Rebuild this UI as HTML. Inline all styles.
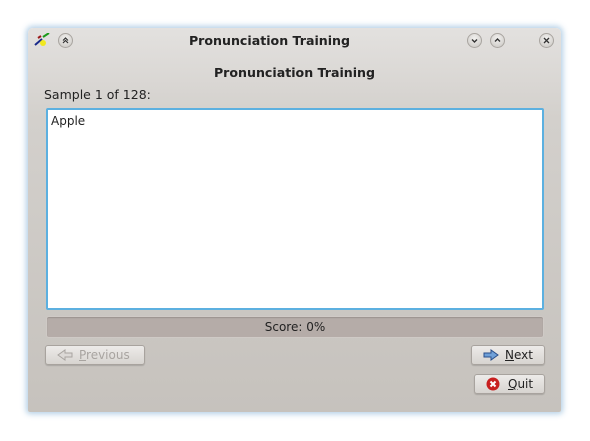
<html><head><style>
body{margin:0;width:590px;height:441px;background:#fff;position:relative;overflow:hidden;font-family:"DejaVu Sans","Liberation Sans",sans-serif;font-size:12px;color:#222}
.win{position:absolute;left:28px;top:28px;width:533px;height:384px;border-radius:5px 5px 2px 2px;background:linear-gradient(#e3e1df,#d3d0cc 90px,#c6c2bd);box-shadow:0 0 6px 2px rgba(90,150,200,.45);}
.a{position:absolute}
.cb{position:absolute;width:13px;height:13px;border-radius:50%;background:radial-gradient(circle at 50% 35%,#f2f1ef,#c9c6c2);border:1px solid #a9a5a0}
.cb svg{position:absolute;left:0;top:0}
.btn{position:absolute;height:18px;border:1px solid #a8a39e;border-radius:3px;background:linear-gradient(#edebe9,#d7d4d0);font-size:12px;line-height:18px;box-shadow:0 1px 1px rgba(0,0,0,.15)}
</style></head><body>
<div class="win">
<svg class="a" style="left:6px;top:5px" width="16" height="14"><line x1="1" y1="12" x2="8" y2="6" stroke="#1a2a8a" stroke-width="2"/><line x1="4" y1="5" x2="7" y2="3" stroke="#9a1a1a" stroke-width="2"/><line x1="9" y1="4" x2="15" y2="0" stroke="#1a9a1a" stroke-width="2"/><circle cx="9" cy="10" r="3" fill="#f0e820"/></svg>
<div class="cb" style="left:30px;top:5px"><svg width="13" height="13"><path d="M4 6.5 6.5 4 9 6.5M4 9 6.5 6.5 9 9" fill="none" stroke="#333" stroke-width="1.2"/></svg></div>
<div class="a" style="left:0;width:483px;top:5px;text-align:center;font-weight:bold;font-size:12.6px">Pronunciation Training</div>
<div class="cb" style="left:439px;top:5px"><svg width="13" height="13"><path d="M4 5.5 6.5 8 9 5.5" fill="none" stroke="#333" stroke-width="1.4"/></svg></div>
<div class="cb" style="left:462px;top:5px"><svg width="13" height="13"><path d="M4 7.5 6.5 5 9 7.5" fill="none" stroke="#333" stroke-width="1.4"/></svg></div>
<div class="cb" style="left:511px;top:5px"><svg width="13" height="13"><path d="M4 4 9 9M9 4 4 9" fill="none" stroke="#333" stroke-width="1.3"/></svg></div>
<div class="a" style="left:0;width:533px;top:37px;text-align:center;font-weight:bold;font-size:12.6px">Pronunciation Training</div>
<div class="a" style="left:16px;top:59px;font-size:12.5px">Sample 1 of 128:</div>
<div class="a" style="left:18px;top:80px;width:494px;height:198px;background:#fff;border:2px solid #5cb0e0;border-radius:2px"><div style="padding:4px 3px">Apple</div></div>
<div class="a" style="left:18px;top:288px;width:496px;height:20px;background:#b5aca8;border:1px solid #cfcac6;border-radius:3px;text-align:center;line-height:20px;box-shadow:inset 0 1px 1px rgba(0,0,0,.15)">Score: 0%</div>
<div class="btn" style="left:17px;top:317px;width:98px;color:#a8a4a0"><svg style="position:absolute;left:11px;top:3px" width="16" height="12"><path d="M15 4H8V1L1 6 8 11V8H15Z" fill="#dcd9d6" stroke="#a8a4a0"/></svg><span style="position:absolute;left:33px"><u>P</u>revious</span></div>
<div class="btn" style="left:443px;top:317px;width:72px"><svg style="position:absolute;left:11px;top:3px" width="16" height="12"><path d="M1 4H8V1L15 6 8 11V8H1Z" fill="#6fa0d8" stroke="#2a4f8a"/></svg><span style="position:absolute;left:33px"><u>N</u>ext</span></div>
<div class="btn" style="left:446px;top:346px;width:69px"><svg style="position:absolute;left:11px;top:2px" width="14" height="14"><circle cx="7" cy="7" r="6.5" fill="#c82020"/><path d="M4.5 4.5 9.5 9.5M9.5 4.5 4.5 9.5" stroke="#fff" stroke-width="2"/></svg><span style="position:absolute;left:33px"><u>Q</u>uit</span></div>
</div>
</body></html>
